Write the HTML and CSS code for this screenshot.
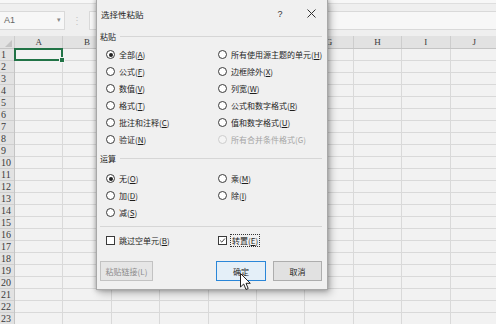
FILE: index.html
```html
<!DOCTYPE html>
<html lang="zh">
<head>
<meta charset="utf-8">
<link rel="stylesheet" href="styles.css">
</head>
<body>
<div class="app">
  <div class="ribbon-edge"></div>
  <div class="formula-row">
    <div class="namebox"><span>A1</span><span class="dd">&#9662;</span></div>
    <div class="sep">&#8942;</div>
    <div class="fx"></div>
  </div>
  <div class="sheet">
    <div class="colhead">
      <div class="corner"></div>
      <div class="ch">A</div><div class="ch">B</div><div class="ch">C</div><div class="ch">D</div><div class="ch">E</div>
      <div class="ch">F</div><div class="ch">G</div><div class="ch">H</div><div class="ch">I</div><div class="ch">J</div>
    </div>
    <div class="sheet-body">
      <div class="rowhead">
        <div class="rh first">1</div><div class="rh">2</div><div class="rh">3</div><div class="rh">4</div><div class="rh">5</div>
        <div class="rh">6</div><div class="rh">7</div><div class="rh">8</div><div class="rh">9</div><div class="rh">10</div>
        <div class="rh">11</div><div class="rh">12</div><div class="rh">13</div><div class="rh">14</div><div class="rh">15</div>
        <div class="rh">16</div><div class="rh">17</div><div class="rh">18</div><div class="rh">19</div><div class="rh">20</div>
        <div class="rh">21</div><div class="rh">22</div><div class="rh">23</div>
      </div>
      <div class="cells">
        <div class="sel"><span class="handle"></span></div>
      </div>
    </div>
  </div>

  <div class="dialog">
    <div class="titlebar">
      <span class="title">选择性粘贴</span>
      <span class="help">?</span>
      <span class="close">
        <svg width="9" height="9" viewBox="0 0 9 9"><path d="M0.5 0.5 L8.5 8.5 M8.5 0.5 L0.5 8.5" stroke="#333" stroke-width="1" fill="none"/></svg>
      </span>
    </div>

    <div class="group-head"><span>粘贴</span><span class="rule"></span></div>
    <div class="radios paste">
      <div class="opt"><span class="radio on"></span>全部(<u>A</u>)</div>
      <div class="opt"><span class="radio"></span>所有使用源主题的单元(<u>H</u>)</div>
      <div class="opt"><span class="radio"></span>公式(<u>F</u>)</div>
      <div class="opt"><span class="radio"></span>边框除外(<u>X</u>)</div>
      <div class="opt"><span class="radio"></span>数值(<u>V</u>)</div>
      <div class="opt"><span class="radio"></span>列宽(<u>W</u>)</div>
      <div class="opt"><span class="radio"></span>格式(<u>T</u>)</div>
      <div class="opt"><span class="radio"></span>公式和数字格式(<u>R</u>)</div>
      <div class="opt"><span class="radio"></span>批注和注释(<u>C</u>)</div>
      <div class="opt"><span class="radio"></span>值和数字格式(<u>U</u>)</div>
      <div class="opt"><span class="radio"></span>验证(<u>N</u>)</div>
      <div class="opt disabled"><span class="radio"></span>所有合并条件格式(G)</div>
    </div>

    <div class="group-head op"><span>运算</span><span class="rule"></span></div>
    <div class="radios ops">
      <div class="opt"><span class="radio on"></span>无(<u>O</u>)</div>
      <div class="opt"><span class="radio"></span>乘(<u>M</u>)</div>
      <div class="opt"><span class="radio"></span>加(<u>D</u>)</div>
      <div class="opt"><span class="radio"></span>除(<u>I</u>)</div>
      <div class="opt"><span class="radio"></span>减(<u>S</u>)</div>
    </div>

    <div class="divider"></div>

    <div class="radios checks">
      <div class="opt"><span class="check"></span>跳过空单元(<u>B</u>)</div>
      <div class="opt"><span class="check on">
        <svg width="9" height="9" viewBox="0 0 9 9"><path d="M1.5 4.5 L3.6 6.6 L7.6 2" stroke="#222" stroke-width="1.1" fill="none"/></svg>
      </span><span class="focus">转置(<u>E</u>)</span></div>
    </div>

    <div class="buttons">
      <button class="btn disabled">粘贴链接(L)</button>
      <span class="spacer"></span>
      <button class="btn primary">确定</button>
      <button class="btn">取消</button>
    </div>
  </div>

  <svg class="cursor" width="12" height="18" viewBox="0 0 12 18">
    <path d="M0.5 0.5 L0.5 14 L3.7 11 L6 16.5 L8.2 15.5 L6 10.3 L10.3 10.3 Z" fill="#fff" stroke="#222" stroke-width="1" stroke-linejoin="round"/>
  </svg>
</div>
</body>
</html>
```
FILE: styles.css
```css
html, body {
  margin: 0;
  padding: 0;
}
body {
  width: 496px;
  height: 324px;
  overflow: hidden;
  background: #efefef;
  font-family: "Liberation Serif", serif;
}
.app {
  position: relative;
  width: 496px;
  height: 324px;
  overflow: hidden;
}
.ribbon-edge {
  height: 3px;
  background: #f7f7f7;
  border-bottom: 1px solid #dedede;
}
.formula-row {
  display: flex;
  align-items: center;
  height: 20px;
  margin-top: 6px;
}
.namebox {
  width: 65px;
  height: 19px;
  box-sizing: border-box;
  background: #f7f7f7;
  border: 1px solid #d9d9d9;
  border-left: none;
  display: flex;
  align-items: center;
  justify-content: space-between;
  padding: 0 3px 0 4px;
  font: 9px "Liberation Sans", sans-serif;
  color: #666;
}
.namebox .dd {
  font-size: 7px;
  color: #888;
}
.sep {
  width: 24px;
  text-align: center;
  font: 10px "Liberation Sans", sans-serif;
  color: #c4c4c4;
}
.fx {
  flex: 1;
  height: 19px;
  box-sizing: border-box;
  background: #f7f7f7;
  border: 1px solid #d9d9d9;
  border-right: none;
}
.sheet {
  margin-top: 6px;
}
.colhead {
  display: grid;
  grid-template-columns: 15px repeat(10, 48.4px);
  height: 12px;
  background: #e2e2e2;
  border-bottom: 1px solid #c4c4c4;
}
.corner {
  border-right: 1px solid #cdcdcd;
  position: relative;
}
.corner::after {
  content: "";
  position: absolute;
  right: 2px;
  bottom: 1px;
  border-left: 7px solid transparent;
  border-bottom: 7px solid #c4c4c4;
}
.ch {
  border-right: 1px solid #cdcdcd;
  text-align: center;
  font-size: 9px;
  line-height: 12px;
  color: #3a3a3a;
}
.sheet-body {
  display: flex;
}
.rowhead {
  width: 15px;
  flex: none;
  background: #e2e2e2;
  box-sizing: border-box;
  border-right: 1px solid #c4c4c4;
}
.rh {
  height: 12px;
  box-sizing: border-box;
  border-bottom: 1px solid #cfcfcf;
  font-size: 10px;
  line-height: 11px;
  padding-left: 1px;
  color: #3a3a3a;
}
.rh.first {
  height: 12px;
}
.cells {
  flex: 1;
  position: relative;
  background-color: #f2f2f2;
  background-image:
    repeating-linear-gradient(to bottom, transparent 0 11px, #d9d9d9 11px 12px),
    repeating-linear-gradient(to right, transparent 0 47.4px, #d9d9d9 47.4px 48.4px);
}
.sel {
  position: absolute;
  left: -1px;
  top: -1px;
  width: 49px;
  height: 13px;
  box-sizing: border-box;
  border: 2px solid #217346;
}
.handle {
  position: absolute;
  right: -4px;
  bottom: -4px;
  width: 4px;
  height: 4px;
  background: #217346;
  border: 1px solid #f2f2f2;
}

/* dialog */
.dialog {
  position: absolute;
  left: 96px;
  top: -1px;
  width: 232px;
  height: 291px;
  box-sizing: border-box;
  background: #f0f0f0;
  border: 1px solid #a8a8a8;
  box-shadow: 0 0 5px rgba(0, 0, 0, 0.35), 3px 4px 8px rgba(0, 0, 0, 0.2);
  padding: 0 5px 0 3px;
  font-family: "Noto Sans CJK SC", "Noto Sans", sans-serif;
  font-size: 8px;
  color: #1e1e1e;
}
.titlebar {
  display: flex;
  align-items: center;
  height: 27px;
}
.title {
  flex: 1;
  padding-left: 1px;
  font-size: 8.5px;
}
.help {
  width: 10px;
  text-align: center;
  font: 9px "Liberation Sans", sans-serif;
  color: #333;
  margin-right: 22px;
}
.close {
  display: flex;
  margin-right: 6px;
}
.group-head {
  display: flex;
  align-items: center;
  height: 18px;
  gap: 4px;
}
.group-head .rule {
  flex: 1;
  height: 1px;
  background: #d6d6d6;
}
.group-head.op {
  margin-top: 1px;
}
.radios {
  display: grid;
  grid-template-columns: 112px 1fr;
  padding-left: 6px;
}
.paste {
  margin-top: 1px;
}
.ops {
  margin-top: 3px;
}
.opt {
  display: flex;
  align-items: center;
  height: 17px;
  white-space: nowrap;
}
.opt u {
  text-decoration-thickness: 1px;
  text-underline-offset: 1px;
}
.radio {
  width: 9px;
  height: 9px;
  box-sizing: border-box;
  border: 1px solid #3a3a3a;
  border-radius: 50%;
  background: #fff;
  margin-right: 4px;
  position: relative;
  flex: none;
}
.radio.on::after {
  content: "";
  position: absolute;
  left: 1.5px;
  top: 1.5px;
  width: 4px;
  height: 4px;
  border-radius: 50%;
  background: #222;
}
.opt.disabled {
  color: #a5a5a5;
}
.opt.disabled .radio {
  border-color: #cdcdcd;
  background: #f4f4f4;
}
.divider {
  height: 1px;
  background: #d6d6d6;
  margin: 5px 0 0 0;
}
.checks {
  margin-top: 5px;
}
.check {
  width: 9px;
  height: 9px;
  box-sizing: border-box;
  border: 1px solid #3a3a3a;
  background: #fff;
  margin-right: 4px;
  flex: none;
  display: flex;
  align-items: center;
  justify-content: center;
}
.check svg {
  display: block;
}
.focus {
  outline: 1px dotted #333;
  outline-offset: 0;
  padding: 0 1px;
  line-height: 11px;
}
.buttons {
  display: flex;
  align-items: center;
  margin-top: 12px;
}
.spacer {
  flex: 1;
}
.btn {
  height: 20px;
  box-sizing: border-box;
  border: 1px solid #adadad;
  background: #e1e1e1;
  font-family: "Noto Sans CJK SC", "Noto Sans", sans-serif;
  font-size: 8px;
  color: #1e1e1e;
  padding: 0;
  margin: 0;
  width: 49px;
}
.btn.disabled {
  width: 53px;
  color: #8c8c8c;
  border-color: #c2c2c2;
  background: #e6e6e6;
}
.btn.primary {
  width: 50px;
  margin-right: 7px;
  border-color: #2a86d8;
  background: #e4eff8;
}
.cursor {
  position: absolute;
  left: 240px;
  top: 273px;
}
```
